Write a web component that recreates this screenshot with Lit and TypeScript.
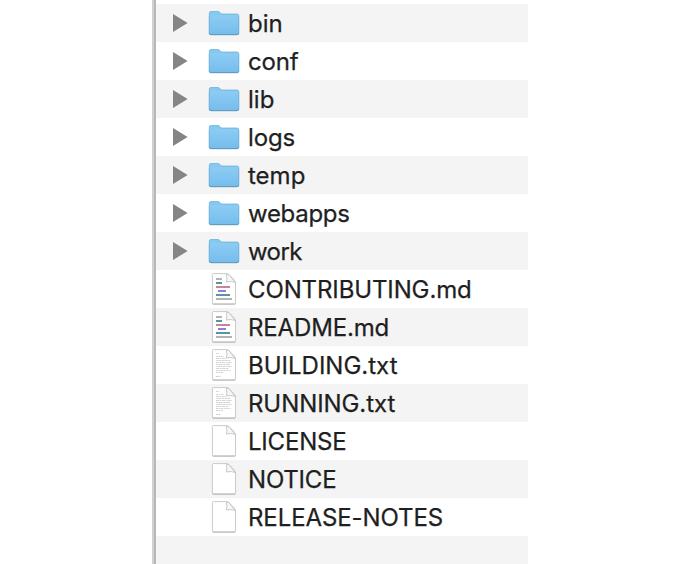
import { LitElement, html, css, svg } from "lit";
import { customElement } from "lit/decorators.js";

type Kind = "folder" | "md" | "txt" | "blank";
interface Entry { name: string; kind: Kind; spacing: number; }

const ENTRIES: Entry[] = [
  { name: "bin", kind: "folder", spacing: 0 },
  { name: "conf", kind: "folder", spacing: -0.2 },
  { name: "lib", kind: "folder", spacing: 0 },
  { name: "logs", kind: "folder", spacing: -0.1 },
  { name: "temp", kind: "folder", spacing: 0 },
  { name: "webapps", kind: "folder", spacing: -0.3 },
  { name: "work", kind: "folder", spacing: -0.6 },
  { name: "CONTRIBUTING.md", kind: "md", spacing: -0.12 },
  { name: "README.md", kind: "md", spacing: -0.15 },
  { name: "BUILDING.txt", kind: "txt", spacing: 0 },
  { name: "RUNNING.txt", kind: "txt", spacing: -0.08 },
  { name: "LICENSE", kind: "blank", spacing: -0.2 },
  { name: "NOTICE", kind: "blank", spacing: -0.2 },
  { name: "RELEASE-NOTES", kind: "blank", spacing: -0.1 },
];

const arrow = html`<svg width="16" height="20" viewBox="0 0 16 20"><path d="M1 1 15.6 10 1 19z" fill="#858585"/></svg>`;

const folder = html`<svg width="32" height="38" viewBox="0 0 32 38">
  <defs><linearGradient id="face" x1="0" y1="0" x2="0" y2="1"><stop offset="0" stop-color="#8bcbf4"/><stop offset="1" stop-color="#76bdec"/></linearGradient></defs>
  <path d="M1.3 30V9q0-1.5 1.5-1.5H10q1 0 1.7.8l.8 1q.6.7 1.6.7h15.1q1.5 0 1.5 1.5V30z" fill="#83c9f2" stroke="#68acd6" stroke-width=".7"/>
  <path d="M1.3 12.4h29.4V29q0 1.5-1.5 1.5H2.8q-1.5 0-1.5-1.5z" fill="url(#face)" stroke="#67add9" stroke-width=".6"/>
  <path d="M1.7 12.2h28.6" stroke="#a2d9f9" stroke-width=".8"/>
  <path d="M1.4 29.4q.2 1.3 1.4 1.3h26.4q1.2 0 1.4-1.3" fill="none" stroke="#5b91b3" stroke-width=".9"/>
</svg>`;

const bar = (x: number, y: number, w: number, c: string) => svg`<path d=${`M${x} ${y}h${w}`} stroke=${c} stroke-width="2"/>`;

const mdLines = [
  bar(5, 9, 6, "#b3b3b3"), bar(5, 13, 6, "#56989e"),
  bar(5, 17, 14, "#c48891"), bar(7, 21, 8, "#9878e8"),
  bar(5, 25, 14, "#56989e"), bar(5, 29, 16, "#b3b3b3"),
];

const txtLines = svg`<g fill="none" stroke="#8c8c8c" stroke-width=".7" opacity=".55">
  <path d="M5 7.5h3" stroke-dasharray="1.5 .5"/>
  <path d="M5 10.5h8" stroke-dasharray="2.2 .7 1.3 .6"/>
  <path d="M5 12.5h10" stroke-dasharray="3 .6 1.4 .8"/>
  <path d="M5 14.5h15" stroke-dasharray="1.8 .6 3 .7"/>
  <path d="M5 16.5h16" stroke-dasharray="3.4 .6 1 .7"/>
  <path d="M5 18.5h14" stroke-dasharray="2 .5 4 .8"/>
  <path d="M5 20.5h16" stroke-dasharray="1.2 .6 2.5 .5"/>
  <path d="M5 22.5h13" stroke-dasharray="3 .8 2 .5"/>
  <path d="M5 24.5h15" stroke-dasharray="2.4 .6 1.3 .6"/>
  <path d="M5 26.5h7" stroke-dasharray="2 .6"/>
  <path d="M5 30.5h5" stroke-dasharray="2 .5"/>
</g>`;

const page = (lines: unknown) => html`<svg width="26" height="38" viewBox="0 0 26 38">
  <path d="M2.4 3.6H15.5Q17 3.6 18 4.7L23.4 10.2Q24.5 11.3 24.5 13V33q0 1-1 1H2.4q-1 0-1-1V4.6q0-1 1-1z" fill="#fff" stroke="#c4c4c4" stroke-width=".9"/>
  <path d="M1.6 34.1h22.7" stroke="#ababab" stroke-width=".8"/>
  ${lines}
  <path d="M15.3 4q1.2 4 .1 8 4.5-1.2 8.7.4L18 4.7z" fill="#f7f7f7" stroke="#bebebe" stroke-width=".8" stroke-linejoin="round"/>
</svg>`;

@customElement("file-row")
export class FileRow extends LitElement {
  static properties = { entry: { attribute: false } };
  declare entry: Entry;
  static styles = css`
    :host { display: grid; grid-template-columns: 50px 42px 1fr; height: 38px; align-items: center; }
    svg { display: block; }
    .toggle { padding-left: 16px; }
    .icon { display: flex; width: 32px; justify-content: center; margin-left: 2px; }
    .name { padding-top: 2px; font: 400 24px/36px Inter, "Liberation Sans", sans-serif; color: #1f1f1f;
      -webkit-text-stroke: 0.25px #1f1f1f; white-space: nowrap; }
  `;
  render() {
    const { name, kind, spacing } = this.entry;
    const icon = kind === "folder" ? folder : page(kind === "md" ? mdLines : kind === "txt" ? txtLines : null);
    return html`<div class="toggle">${kind === "folder" ? arrow : null}</div>
      <div class="icon">${icon}</div>
      <div class="name" style="letter-spacing:${spacing}px">${name}</div>`;
  }
}

@customElement("app-root")
export class AppRoot extends LitElement {
  static styles = css`
    :host { display: block; height: 564px; overflow: hidden; background: #fff; }
    .pane { box-sizing: border-box; width: 376px; height: 564px; margin-left: 152px; padding-top: 4px;
      display: flex; flex-direction: column; border-left: 2px solid #d0d0d0;
      background: linear-gradient(90deg, #b7b7b7 2px, transparent 2px) padding-box no-repeat; }
    .row { flex: none; margin-left: 2px; }
    .row:nth-child(odd) { background: #f4f4f4; }
    .rest { flex: 1; margin-left: 2px; background: #f4f4f4; }
  `;
  render() {
    return html`<div class="pane">
      ${ENTRIES.map((e) => html`<file-row class="row" .entry=${e}></file-row>`)}
      <div class="rest"></div>
    </div>`;
  }
}
